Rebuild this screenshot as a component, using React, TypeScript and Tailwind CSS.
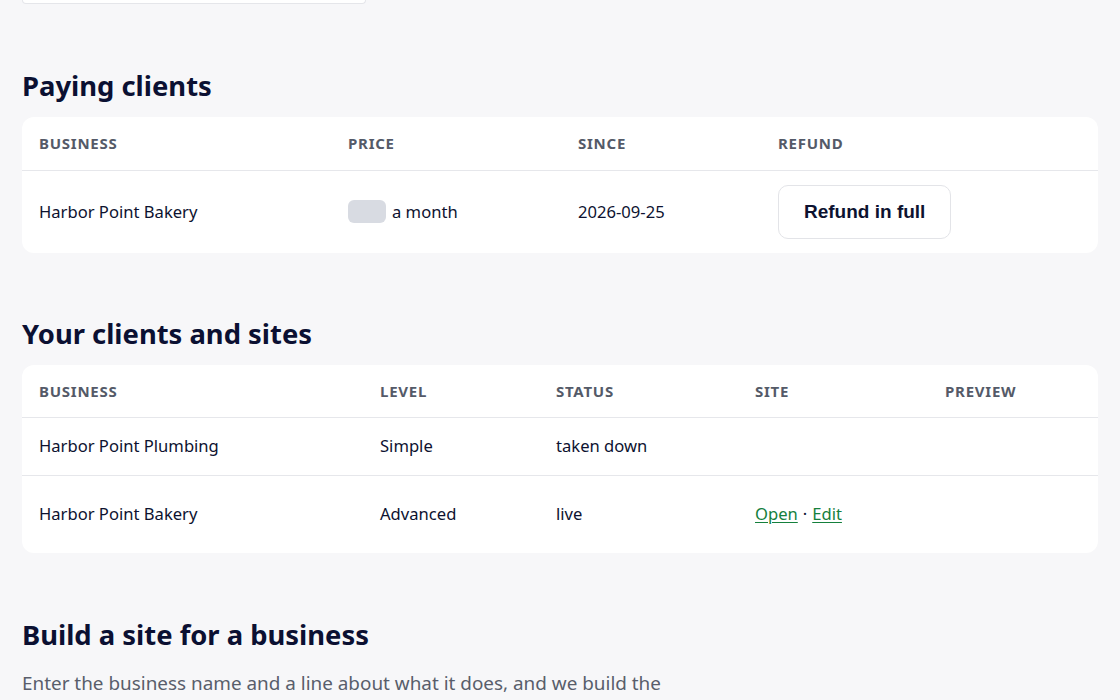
import React from "react";

const font = { fontFamily: '"Noto Sans", "Open Sans", sans-serif' };

function Th({ children, w }: { children?: React.ReactNode; w?: string }) {
  return (
    <div className={`${w ?? "flex-1"} text-[15px] font-bold tracking-[0.05em] text-[#545a68] uppercase`}>
      {children}
    </div>
  );
}

function Td({ children, w }: { children?: React.ReactNode; w?: string }) {
  return <div className={`${w ?? "flex-1"} text-[16.6px] text-[#0d1230] flex items-center`}>{children}</div>;
}

export default function App() {
  return (
    <div className="min-h-[700px] bg-[#f7f7f9] overflow-hidden" style={font}>
      <div className="px-[22px]">
        <div className="w-[344px] h-[4px] bg-white border border-t-0 border-[#e5e6ea] rounded-b-[12px]" />

        <h2 className="mt-[64px] text-[27.4px] leading-[36px] font-bold text-[#0b1032]">Paying clients</h2>
        <div className="mt-[13px] bg-white rounded-[12px] overflow-hidden">
          <div className="flex items-center h-[54px] px-[17px] border-b border-[#e6e7eb]">
            <Th w="w-[309px]">Business</Th>
            <Th w="w-[230px]">Price</Th>
            <Th w="w-[200px]">Since</Th>
            <Th>Refund</Th>
          </div>
          <div className="flex items-center h-[82px] px-[17px]">
            <Td w="w-[309px]">Harbor Point Bakery</Td>
            <Td w="w-[230px]">
              <span className="inline-block w-[38px] h-[23px] rounded-[6px] bg-[#d8dbe2] mr-[6px]" />
              a month
            </Td>
            <Td w="w-[200px]">2026-09-25</Td>
            <div className="flex-1">
              <button
                className="h-[54px] px-[25px] rounded-[10px] border border-[#e3e4e8] bg-white text-[19px] font-bold text-[#0d1230]"
                style={{ fontFamily: '"Liberation Sans", Arial, sans-serif' }}
              >
                Refund in full
              </button>
            </div>
          </div>
        </div>

        <h2 className="mt-[63px] text-[27.4px] leading-[36px] font-bold text-[#0b1032]">Your clients and sites</h2>
        <div className="mt-[13px] bg-white rounded-[12px] overflow-hidden">
          <div className="flex items-center h-[53px] px-[17px] border-b border-[#e6e7eb]">
            <Th w="w-[341px]">Business</Th>
            <Th w="w-[176px]">Level</Th>
            <Th w="w-[199px]">Status</Th>
            <Th w="w-[190px]">Site</Th>
            <Th>Preview</Th>
          </div>
          <div className="flex items-center h-[58px] px-[17px] border-b border-[#e6e7eb]">
            <Td w="w-[341px]">Harbor Point Plumbing</Td>
            <Td w="w-[176px]">Simple</Td>
            <Td w="w-[199px]">taken down</Td>
            <Td w="w-[190px]" />
            <Td />
          </div>
          <div className="flex items-center h-[77px] px-[17px]">
            <Td w="w-[341px]">Harbor Point Bakery</Td>
            <Td w="w-[176px]">Advanced</Td>
            <Td w="w-[199px]">live</Td>
            <Td w="w-[190px]">
              <a href="#" className="text-[#15803d] underline underline-offset-2">Open</a>
              <span className="mx-[5px]">·</span>
              <a href="#" className="text-[#15803d] underline underline-offset-2">Edit</a>
            </Td>
            <Td />
          </div>
        </div>

        <h2 className="mt-[64px] text-[27.4px] leading-[36px] font-bold text-[#0b1032]">Build a site for a business</h2>
        <p className="mt-[16px] text-[18.9px] text-[#595e6b]">
          Enter the business name and a line about what it does, and we build the
        </p>
      </div>
    </div>
  );
}
